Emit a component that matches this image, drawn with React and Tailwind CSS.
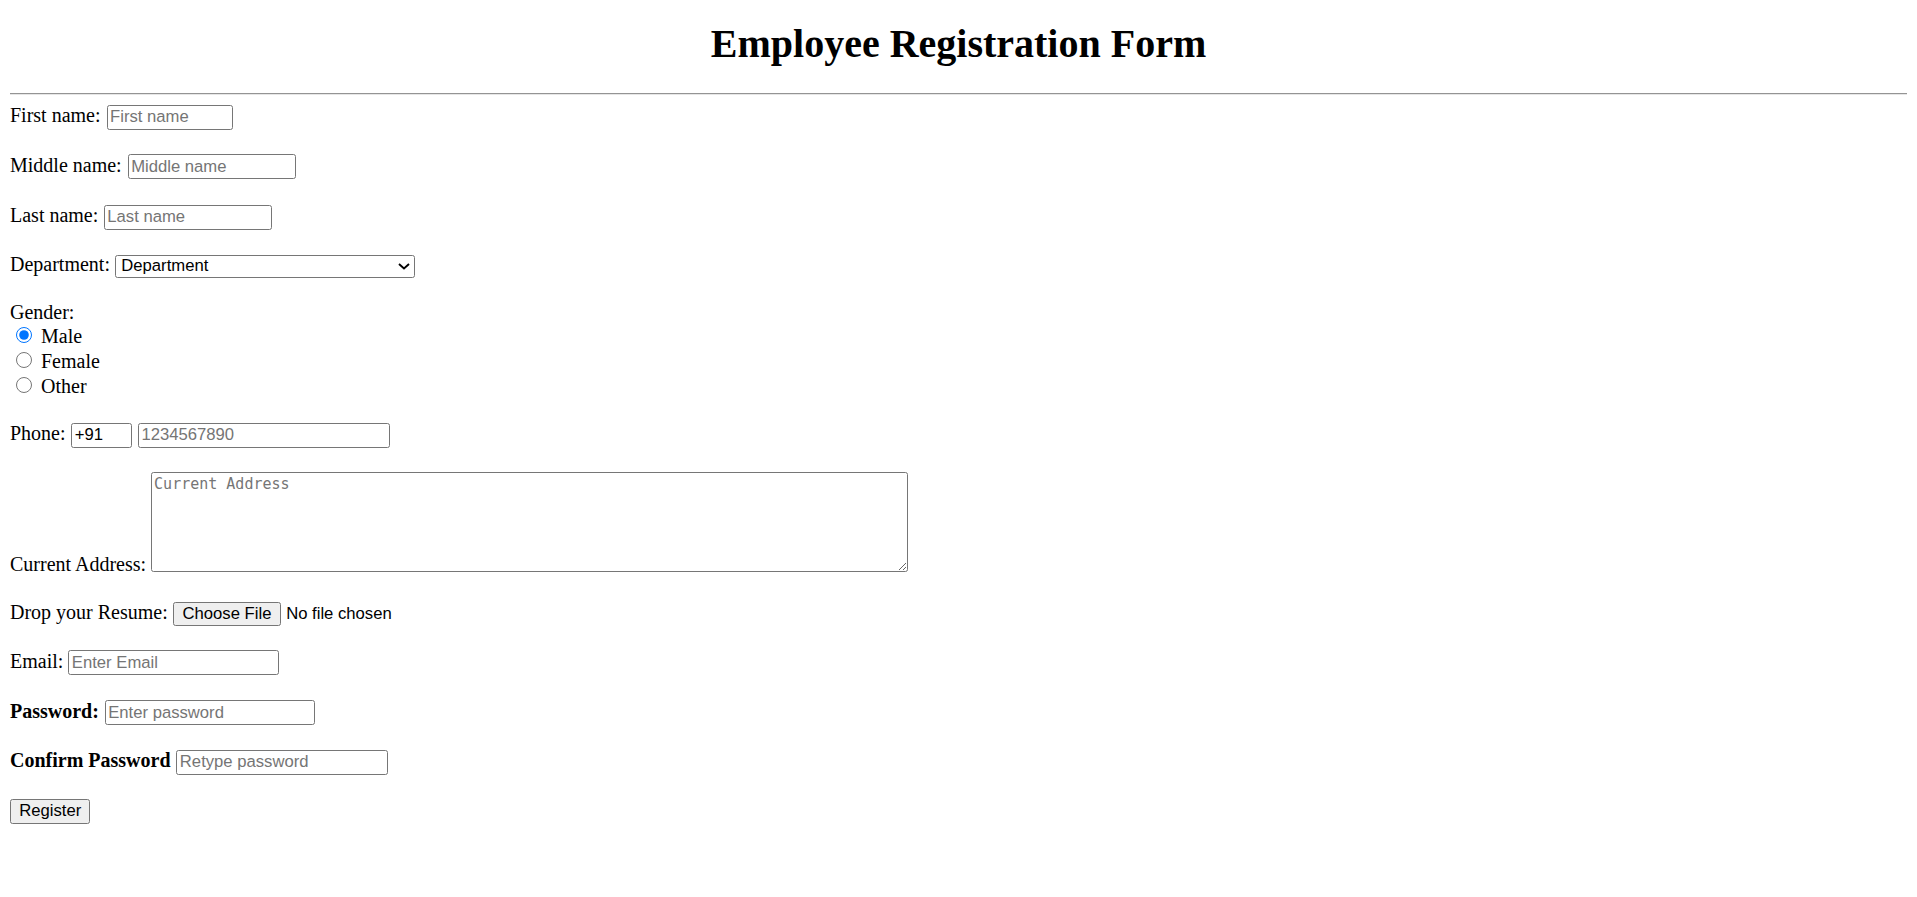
import React, { useState } from 'react';

const fieldClass =
    "h-[25px] border border-[#767676] rounded-[2.5px] px-[2.5px] bg-white text-black text-[16.67px] font-['Liberation_Sans',Arial,sans-serif] placeholder:text-[#757575] outline-none";

const buttonClass =
    "border border-[#767676] rounded-[2.5px] bg-[#efefef] text-black text-[16.67px] font-['Liberation_Sans',Arial,sans-serif] leading-none";

const App = () => {

    const [gender, setGender] = useState("male");

    return (
        <div className="min-h-screen bg-white text-black px-[10px] text-[20px] leading-[23px] font-['Liberation_Serif','Times_New_Roman',serif]">

            <h1 className="pt-[21px] text-center text-[40px] leading-[46px] font-bold">
                Employee Registration Form
            </h1>

            <hr className="mt-[26.3px] h-0 border-0 border-t border-b border-t-[#949494] border-b-[#e6e6e6]" />

            <form className="flex flex-col items-start" onSubmit={(e) => e.preventDefault()}>

                {/* Names */}
                <div className="mt-[8.8px] flex items-baseline gap-[6px]">
                    <span>First name:</span>
                    <input type="text" placeholder="First name" className={`${fieldClass} w-[126.5px]`} />
                </div>

                <div className="mt-[24.2px] flex items-baseline gap-[6px]">
                    <span>Middle name:</span>
                    <input type="text" placeholder="Middle name" className={`${fieldClass} w-[168.6px]`} />
                </div>

                <div className="mt-[24.8px] flex items-baseline gap-[5.5px]">
                    <span>Last name:</span>
                    <input type="text" placeholder="Last name" className={`${fieldClass} w-[168.6px]`} />
                </div>

                {/* Department */}
                <div className="mt-[23.8px] flex items-baseline gap-[5.3px]">
                    <span>Department:</span>
                    <div className="relative flex">
                        <select
                            defaultValue=""
                            className="appearance-none h-[22.3px] w-[300px] border border-[#767676] rounded-[2.5px] pl-[5px] bg-white text-black text-[16.67px] leading-[20px] font-['Liberation_Sans',Arial,sans-serif] outline-none"
                        >
                            <option value="">Department</option>
                            <option value="hr">HR</option>
                            <option value="it">IT</option>
                            <option value="sales">Sales</option>
                        </select>
                        <svg
                            className="pointer-events-none absolute right-[5px] top-[8px]"
                            width="12"
                            height="7"
                            viewBox="0 0 12 7"
                            fill="none"
                        >
                            <path d="M1 1l5 4.5L11 1" stroke="#000" strokeWidth="1.9" />
                        </svg>
                    </div>
                </div>

                {/* Gender */}
                <div className="mt-[23.2px]">Gender:</div>
                {[
                    { value: "male", label: "Male" },
                    { value: "female", label: "Female" },
                    { value: "other", label: "Other" },
                ].map((g) => (
                    <label key={g.value} className="flex items-baseline h-[25px]">
                        <input
                            type="radio"
                            name="gender"
                            value={g.value}
                            checked={gender === g.value}
                            onChange={() => setGender(g.value)}
                            className="w-[16px] h-[16px] ml-[6.25px] mr-[3.75px] mt-[3.75px] accent-[#0075ff]"
                        />
                        <span className="ml-[5px]">{g.label}</span>
                    </label>
                ))}

                {/* Phone */}
                <div className="mt-[23.4px] flex items-baseline gap-[5.7px]">
                    <span>Phone:</span>
                    <input type="text" defaultValue="+91" className={`${fieldClass} w-[61px]`} />
                    <input type="text" placeholder="1234567890" className={`${fieldClass} w-[252px]`} />
                </div>

                {/* Address */}
                <div className="mt-[23.9px] flex items-end gap-[4.5px]">
                    <span className="-mb-[3.5px]">Current Address:</span>
                    <textarea
                        placeholder="Current Address"
                        className="w-[757.6px] h-[100.6px] resize border border-[#767676] rounded-[2.5px] px-[2.5px] py-[2px] bg-white text-[15px] leading-[19px] font-['DejaVu_Sans_Mono','Liberation_Mono',monospace] placeholder:text-[#757575] outline-none"
                    />
                </div>

                {/* Resume */}
                <div className="mt-[28.5px] flex items-baseline gap-[5.5px]">
                    <span>Drop your Resume:</span>
                    <button type="button" className={`${buttonClass} w-[107.4px] h-[24.6px]`}>
                        Choose File
                    </button>
                    <span className="text-[16.67px] font-['Liberation_Sans',Arial,sans-serif]">No file chosen</span>
                </div>

                {/* Account */}
                <div className="mt-[23.5px] flex items-baseline gap-[5px]">
                    <span>Email:</span>
                    <input type="email" placeholder="Enter Email" className={`${fieldClass} w-[211px]`} />
                </div>

                <div className="mt-[24.4px] flex items-baseline gap-[5.8px]">
                    <span className="font-bold">Password:</span>
                    <input type="password" placeholder="Enter password" className={`${fieldClass} w-[210.6px]`} />
                </div>

                <div className="mt-[24.2px] flex items-baseline gap-[5.8px]">
                    <span className="font-bold">Confirm Password</span>
                    <input type="password" placeholder="Retype password" className={`${fieldClass} w-[211.4px]`} />
                </div>

                <button type="submit" className={`${buttonClass} mt-[24.3px] w-[80.4px] h-[25.3px]`}>
                    Register
                </button>

            </form>

        </div>
    );
};

export default App;
